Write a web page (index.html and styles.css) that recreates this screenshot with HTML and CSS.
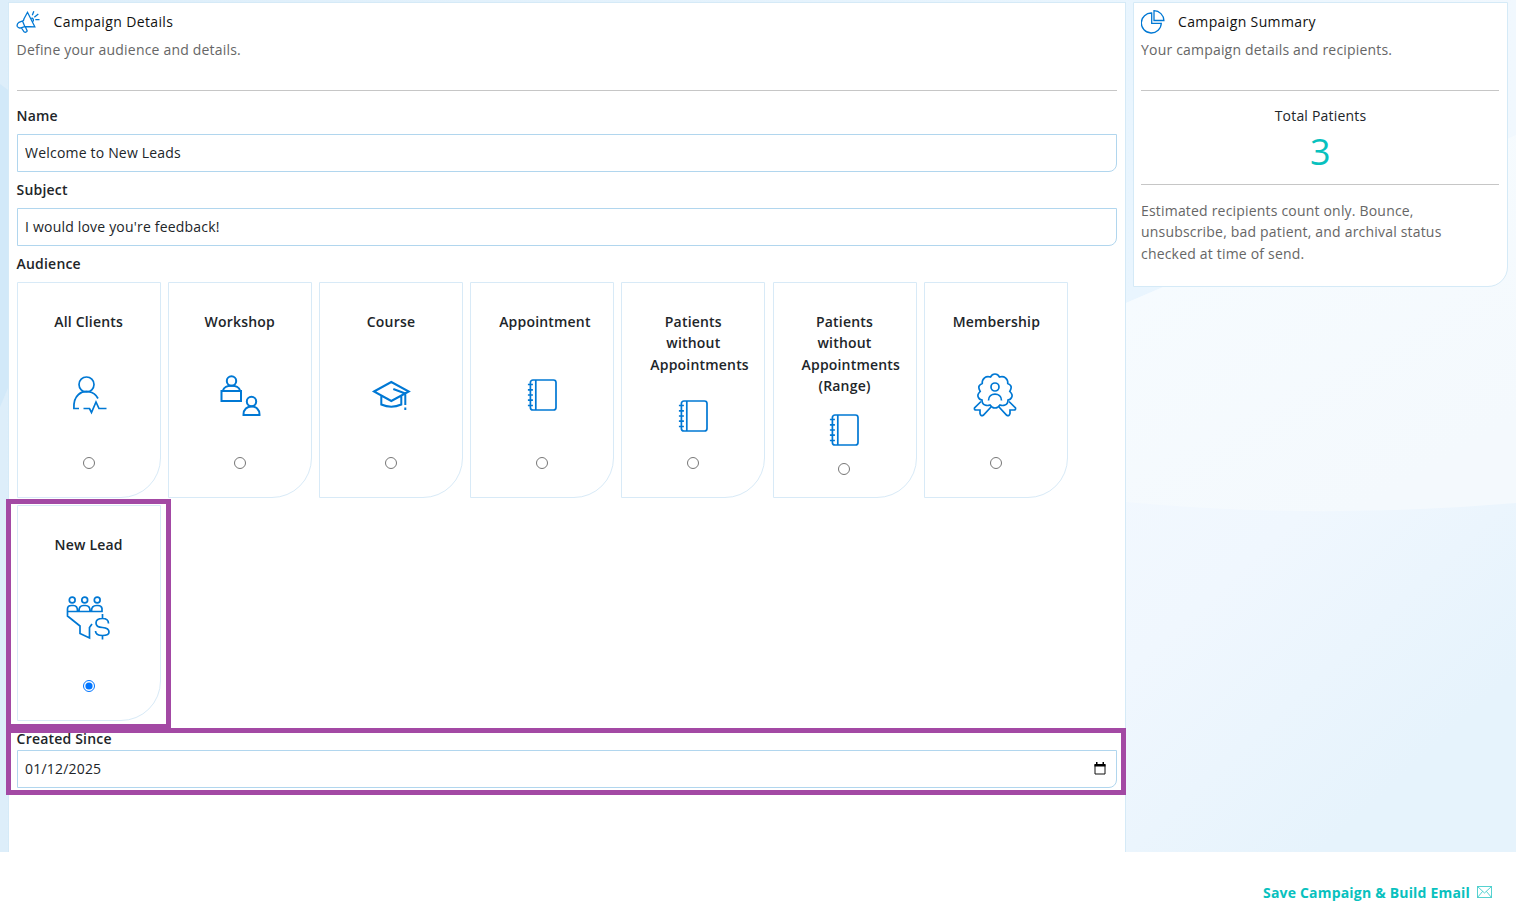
FILE: index.html
```html
<!DOCTYPE html>
<html lang="en">
<head>
<meta charset="utf-8">
<title>Campaign</title>
<link rel="stylesheet" href="styles.css">
</head>
<body>
<svg class="defs" width="0" height="0">
  <symbol id="notebook" viewBox="0 0 44 44">
    <rect x="10.400" y="7" width="25.600" height="30" rx="2.500"/><path d="M15.800 7v30M7.900 11.500h5M7.900 16.800h5M7.900 22h5M7.900 27.200h5M7.900 32.500h5"/>
  </symbol>
</svg>
<div class="page">
  <svg class="backdrop" viewBox="0 0 1516 852" preserveAspectRatio="none">
    <defs>
      <linearGradient id="sky" x1="0" y1="0" x2="1" y2="0"><stop offset="0" stop-color="#ddeefa"/><stop offset=".75" stop-color="#e9f5fe"/><stop offset="1" stop-color="#f1f8fe"/></linearGradient>
      <linearGradient id="dusk" x1="0" y1="0" x2=".5" y2="1"><stop offset="0" stop-color="#f5faff"/><stop offset=".6" stop-color="#f0f7fe"/><stop offset="1" stop-color="#e6f3fc"/></linearGradient>
      <linearGradient id="mist" x1="0" y1="0" x2=".6" y2="1"><stop offset="0" stop-color="#f7fcff"/><stop offset="1" stop-color="#f4f9fd"/></linearGradient>
    </defs>
    <rect width="1516" height="852" fill="url(#sky)"/>
    <path d="M0 84L8 90V388L0 407Z" fill="#d2e9f9"/>
    <path d="M1126 303L1516 135V852H1126Z" fill="url(#dusk)"/>
    <path d="M1126 303L1516 135V503Q1320 520 1126 502Z" fill="url(#mist)"/>
  </svg>
  <main class="layout">
    <section class="panel details">
      <header class="heading">
        <svg class="head-icon" viewBox="0 0 24 24"><path d="M8 8.800L11.500 2.300 18.800 16.800 8.800 16.500M8 8.800L7.500 10.500 3 12.300Q.5 14 1.300 16.500 2.500 18.500 4.800 17.800L8.800 16.500 6.500 11M5.500 18L8 21.800Q10 23 11.200 21L9.300 16.800M15.500 8Q18 8.500 17.200 11.500M16.300 5.200L17.800 1.300M18.300 7.200L22.300 4M19.300 9.600H23.500"/></svg>
        <h2>Campaign Details</h2>
      </header>
      <p class="lead">Define your audience and details.</p>
      <hr>
      <label class="label" for="name">Name</label>
      <input class="field" id="name" type="text" value="Welcome to New Leads">
      <label class="label" for="subject">Subject</label>
      <input class="field" id="subject" type="text" value="I would love you're feedback!">
      <div class="label">Audience</div>
      <div class="cards">
        <label class="card"><span>All Clients</span>
          <svg class="icon" viewBox="0 0 44 44"><circle cx="20.500" cy="11.500" r="7.500"/><path d="M32 25.500C28 17.500 18 16.500 12.500 21.500 8.500 25 7.600 30 7.900 35.500H13M17.500 35.500H23.500L25.500 39.500 30 29 33 35.500H40.500"/></svg>
          <input type="radio" name="a"></label>
        <label class="card"><span>Workshop</span>
          <svg class="icon bold" viewBox="0 0 44 44"><circle cx="13.500" cy="8" r="4.700"/><path d="M3.500 18H23V28H3.500zM5 17.500C6 11 21 11 22 17.500"/><circle cx="33.500" cy="28.500" r="4.700"/><path d="M25.500 42C25 30.500 42 30.500 41.500 42z"/></svg>
          <input type="radio" name="a"></label>
        <label class="card"><span>Course</span>
          <svg class="icon bold" viewBox="0 0 44 44"><path d="M5 18.500L22.300 9 39.800 18.500 22.300 28zM12.300 23V31.500Q22.300 36 32.300 31.500V23M24.300 16L36.300 20.500V32M36.300 34.500V37"/></svg>
          <input type="radio" name="a"></label>
        <label class="card"><span>Appointment</span>
          <svg class="icon"><use href="#notebook"/></svg>
          <input type="radio" name="a"></label>
        <label class="card three-line"><span>Patients without Appointments</span>
          <svg class="icon"><use href="#notebook"/></svg>
          <input type="radio" name="a"></label>
        <label class="card four-line"><span>Patients without Appointments (Range)</span>
          <svg class="icon"><use href="#notebook"/></svg>
          <input type="radio" name="a"></label>
        <label class="card"><span>Membership</span>
          <svg class="icon" viewBox="0 0 44 44"><path d="M22 1Q25 1 26.500 4 30 2.800 32.500 4.800 35 7 34.800 10.500 38 12 38.200 14 38.300 15.800 36.800 18.500 40 21.500 38.800 24 38 26.500 35 27 35 31 32 32 29.500 33 27 32 25 35 22 35 19 35 17 32 14.500 33 12 32 9 31 9 27 6 26.500 5.200 24 4 21.500 7.200 18.500 5.700 15.800 5.800 14 6 12 9.200 10.500 9 7 11.500 4.800 14 2.800 17.500 4 19 1 22 1z"/><circle cx="22" cy="14" r="4"/><path d="M15.500 27.500C15.500 19 28.500 19 28.500 27.500M8 28.500L1.500 35Q1 37 3 37H7V40.500Q8 44 10.500 42L18 34M36 28.500L42.500 35Q43 37 41 37H37V40.500Q36 44 33.500 42L26 34"/></svg>
          <input type="radio" name="a"></label>
        <label class="card"><span>New Lead</span>
          <svg class="icon" viewBox="0 0 44 44"><circle cx="6.200" cy="4" r="2.900"/><circle cx="18.700" cy="4" r="2.900"/><circle cx="31.200" cy="4" r="2.900"/><path d="M1.500 15.500H36V12.500Q35.500 9.500 32 9.500H30.500Q25.500 9.500 25.500 15M24 15Q24 9.500 19.500 9.500H17.500Q13 9.500 13 15M11.500 15Q11.500 9.500 7.500 9.500H5.500Q1.500 9.500 1.500 13V20L14 30V37.500L23.500 42V31.500L26 28M42.500 27.500Q42.500 22.500 36.500 22.500 30 22.500 30 27 30 31.300 36.500 31.500 43 32 43 36 43 39.500 36.500 39.500 29.500 39.500 29.500 35M36.500 18V22.500M36.500 39.500V43.500"/></svg>
          <input type="radio" name="a" checked></label>
      </div>
      <label class="label since" for="since">Created Since</label>
      <div class="field date" id="since"><span>01/12/2025</span>
        <svg class="calendar" viewBox="0 0 12 13"><path d="M1 2.500H11V12H1z" fill="none" stroke="#111"/><path d="M.5 2H11.500V4.500H.5zM2 0H3.500V2H2zM8.500 0H10V2H8.500z" fill="#000"/></svg></div>
      <div class="mark mark-lead"></div>
      <div class="mark mark-since"></div>
    </section>
    <aside class="panel summary">
      <header class="heading">
        <svg class="head-icon" viewBox="0 0 24 24"><path d="M10.700 3A10 10 0 1 0 20.300 13.300H10.700zM13 .7V10.500H22.900A10 10 0 0 0 13 .7z"/></svg>
        <h2>Campaign Summary</h2>
      </header>
      <p class="lead">Your campaign details and recipients.</p>
      <hr>
      <div class="total">Total Patients</div>
      <div class="count">3</div>
      <hr class="second">
      <p class="note">Estimated recipients count only. Bounce, unsubscribe, bad patient, and archival status checked at time of send.</p>
    </aside>
  </main>
</div>
<footer class="footer">
  <a class="save">Save Campaign &amp; Build Email</a>
  <svg class="mail" viewBox="0 0 15 12"><path d="M.5.500H14.500V11.500H.5zM.5.500L7.500 7 14.500.500M.5 11.500L5.500 5.500M14.500 11.500L9.500 5.500"/></svg>
</footer>
</body>
</html>
```

FILE: styles.css
```css
* { box-sizing: border-box; }
body { margin: 0; width: 1516px; height: 922px; overflow: hidden; background: #fff; color: #212529; font: 14px/21.4px "Open Sans", sans-serif; letter-spacing: .19px; }
.defs { position: absolute; }
.page { position: relative; height: 852px; overflow: hidden; }
.backdrop { position: absolute; width: 100%; height: 100%; }
.layout { position: relative; display: flex; align-items: flex-start; gap: 7px; padding: 2px 0 0 8px; }
.panel { background: #fff; border: 1px solid #d5eaf7; padding: 8px; }
.details { position: relative; width: 1118px; height: 870px; padding: 8px 8px 0 7.6px; }
.summary { width: 375px; height: 285px; border-bottom-right-radius: 20px; padding: 8px 8px 0 7px; }
.heading { display: flex; align-items: center; height: 22px; gap: 13px; }
.heading h2 { margin: 0; font-size: 14px; font-weight: 500; color: #111; letter-spacing: .37px; }
.head-icon { width: 24px; height: 24px; fill: none; stroke: #0078d4; stroke-width: 1.3; }
.details .head-icon { margin: 0 .7px 0 -.7px; }
.lead { margin: 6px 0 0; color: #666; height: 22px; }
hr { margin: 29px 0 0; border: 0; border-top: 1px solid #c6c6c6; }
.label { display: block; font-weight: 600; height: 43px; padding-top: 14px; }
.field { display: block; width: 100%; height: 38px; border: 1px solid #b1d6ee; border-bottom-right-radius: 8px; padding: 0 7px 2px 7.500px; background: #fff; color: #212529; font: inherit; letter-spacing: inherit; outline: 0; }
.field + .label { height: 36px; padding-top: 7px; }
.cards { display: grid; grid-template-columns: repeat(7, 144px); column-gap: 7.200px; row-gap: 7px; }
.card { display: flex; flex-direction: column; align-items: center; height: 216px; border: 1px solid #d8eaf7; border-bottom-right-radius: 40px; padding: 28px 0 0; font-weight: 600; text-align: center; }
.card span { width: 86px; min-height: 62px; }
.icon { flex: none; width: 44px; height: 44px; margin-right: 1px; fill: none; stroke: #0078d4; stroke-width: 1.7; }
.bold { stroke-width: 2; margin-right: 0; }
.card input { flex: none; width: 12px; height: 12px; margin: 40px .2px 0 0; }
.three-line .icon { margin-top: 19px; }
.three-line input { margin-top: 18.800px; }
.four-line .icon { margin-top: 11px; }
.four-line input { margin-top: 11.400px; }
.label.since { height: 29px; padding-top: 7px; }
.date { display: flex; align-items: center; justify-content: space-between; padding: 0 10px 0 7.500px; }
.calendar { width: 12px; height: 13px; margin-bottom: 1px; }
.mark { position: absolute; border: 5px solid #a349a4; }
.mark-lead { left: -3px; top: 496px; width: 165px; height: 230px; }
.mark-since { left: -3px; top: 725px; width: 1120px; height: 67px; }
.total { text-align: center; padding: 14px 0 0 1px; height: 43px; }
.count { height: 36px; padding-left: 1px; text-align: center; font-size: 36px; line-height: 35px; color: #08c1be; }
hr.second { margin-top: 14px; }
.note { margin: 15px 0 0; width: 330px; color: #666; }
.footer { display: flex; align-items: center; justify-content: flex-end; gap: 7px; height: 70px; padding: 11px 24px 0 0; }
.save { font-weight: 700; color: #08c1be; }
.mail { width: 15px; height: 12px; margin-bottom: 2px; fill: none; stroke: #0bbfbb; stroke-width: .7; }
```
